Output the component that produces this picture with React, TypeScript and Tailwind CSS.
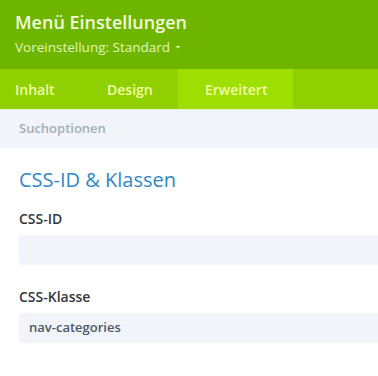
import React from "react";

export default function App() {
  const font = { fontFamily: '"Open Sans", "Noto Sans", sans-serif' };
  return (
    <div className="w-[378px] h-[376px] bg-white overflow-hidden" style={font}>
      <div className="h-[69px] bg-[#6eb500] pl-[15px] pt-[10px]">
        <div className="text-[18px] leading-[24px] font-semibold text-[#f1fbdc]">Menü Einstellungen</div>
        <div className="mt-[4px] flex items-center text-[13.5px] leading-[18px] text-[#e2f5b8]">
          <span>Voreinstellung: Standard</span>
          <svg width="8" height="8" viewBox="0 0 8 8" className="ml-[4px]">
            <path d="M1.5 3 L6.5 3 L4 5.5 Z" fill="#e2f5b8" />
          </svg>
        </div>
      </div>
      <div className="h-[40px] bg-[#90d000] flex text-[14px] font-semibold text-[#effda6]">
        <div className="w-[80px] pl-[15px] flex items-center">Inhalt</div>
        <div className="w-[98px] pl-[27px] flex items-center">Design</div>
        <div className="w-[115px] pl-[27px] flex items-center bg-[#9ede00]">Erweitert</div>
      </div>
      <div className="h-[1px] bg-[#e8f5d0]" />
      <div className="h-[38px] bg-[#f1f5f9] pl-[19px] flex items-center text-[13px] font-semibold text-[#a3aeb9]">
        Suchoptionen
      </div>
      <div className="pl-[19px] pt-[19px]">
        <div className="text-[20px] leading-[26px] text-[#2f88c4]">CSS-ID &amp; Klassen</div>
        <div className="mt-[16px] text-[14px] leading-[20px] font-semibold text-[#32373c]">CSS-ID</div>
        <div className="mt-[6px] h-[30px] bg-[#f1f5f9] rounded-l-[3px]" />
        <div className="mt-[22px] text-[14px] leading-[20px] font-semibold text-[#32373c]">CSS-Klasse</div>
        <div className="mt-[6px] h-[30px] bg-[#f1f5f9] rounded-l-[3px] pl-[10px] flex items-center text-[13px] font-semibold text-[#4c5866]">
          nav-categories
        </div>
      </div>
    </div>
  );
}
